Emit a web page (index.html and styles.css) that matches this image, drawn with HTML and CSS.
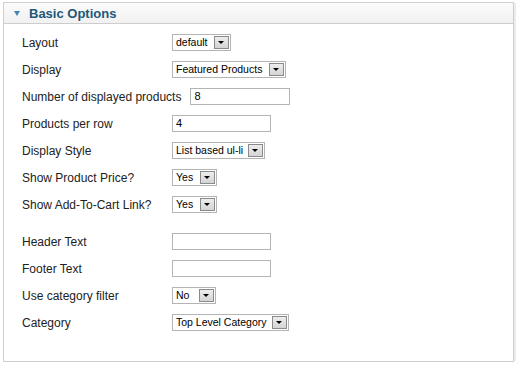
FILE: index.html
```html
<!DOCTYPE html>
<html>

<head>
    <link rel="stylesheet" href="styles.css">
</head>

<body>
    <div class="panel">
        <div class="panel-head">
            <span class="toggle"></span>
            <h3>Basic Options</h3>
        </div>
        <div class="panel-body">
            <div class="row">
                <label>Layout</label>
                <div class="select w-60"><span>default</span><i class="btn"></i></div>
            </div>
            <div class="row">
                <label>Display</label>
                <div class="select w-115"><span>Featured Products</span><i class="btn"></i></div>
            </div>
            <div class="row">
                <label class="long">Number of displayed products</label>
                <div class="input w-100">8</div>
            </div>
            <div class="row">
                <label>Products per row</label>
                <div class="input w-99">4</div>
            </div>
            <div class="row">
                <label>Display Style</label>
                <div class="select w-93"><span>List based ul-li</span><i class="btn"></i></div>
            </div>
            <div class="row">
                <label>Show Product Price?</label>
                <div class="select w-45"><span>Yes</span><i class="btn"></i></div>
            </div>
            <div class="row">
                <label>Show Add-To-Cart Link?</label>
                <div class="select w-45"><span>Yes</span><i class="btn"></i></div>
            </div>
            <div class="spacer"></div>
            <div class="row">
                <label>Header Text</label>
                <div class="input w-99"></div>
            </div>
            <div class="row">
                <label>Footer Text</label>
                <div class="input w-99"></div>
            </div>
            <div class="row">
                <label>Use category filter</label>
                <div class="select w-44"><span>No</span><i class="btn"></i></div>
            </div>
            <div class="row">
                <label>Category</label>
                <div class="select w-118"><span>Top Level Category</span><i class="btn"></i></div>
            </div>
        </div>
    </div>
</body>

</html>
```

FILE: styles.css
```css
body {
    margin: 0;
    background: #fff;
    font-family: "Liberation Sans", Arial, sans-serif;
}

.panel {
    margin: 2px 0 0 3px;
    width: 509px;
    height: 358px;
    border: 1px solid #cfcfcf;
    box-shadow: 3px 0 0 -1px #ececec;
}

.panel-head {
    display: flex;
    align-items: center;
    height: 20px;
    padding-left: 10px;
    border-bottom: 1px solid #cdcdcd;
    background: linear-gradient(to bottom, #fbfbfb, #f1f1f1);
}

.toggle {
    width: 0;
    height: 0;
    border-left: 3px solid transparent;
    border-right: 3px solid transparent;
    border-top: 5px solid #3f86b5;
    margin-right: 9px;
    margin-top: 1px;
}

.panel-head h3 {
    margin: 0;
    font-size: 13px;
    font-weight: bold;
    color: #21577a;
}

.panel-body {
    padding: 5px 0 0 18px;
}

.row {
    display: flex;
    align-items: center;
    height: 27px;
}

.row label {
    min-width: 150px;
    padding-right: 5px;
    box-sizing: border-box;
    white-space: nowrap;
    font-size: 12px;
    color: #222;
}

.row label.long {
    padding-right: 9px;
}

.spacer {
    height: 10px;
}

.select {
    position: relative;
    height: 15px;
    border: 1px solid #b4b4b4;
    background: #fff;
    box-sizing: content-box;
    font-size: 10.5px;
    line-height: 15px;
    color: #000;
}

.select span {
    display: block;
    padding-left: 3px;
    white-space: nowrap;
}

.select .btn {
    position: absolute;
    right: 1px;
    top: 1px;
    width: 13px;
    height: 11px;
    border: 1px solid #8a8a8a;
    background: linear-gradient(to bottom, #ededed, #d4d4d4);
}

.select .btn::after {
    content: '';
    position: absolute;
    left: 3px;
    top: 4px;
    border-left: 3px solid transparent;
    border-right: 3px solid transparent;
    border-top: 3px solid #000;
}

.input {
    height: 15px;
    border: 1px solid #b4b4b4;
    background: #fff;
    font-size: 11px;
    line-height: 15px;
    padding-left: 3px;
    box-sizing: content-box;
}

.w-44 { width: 42px; }
.w-45 { width: 43px; }
.w-60 { width: 57px; }
.w-93 { width: 91px; }
.w-115 { width: 112px; }
.w-118 { width: 115px; }
.w-99 { width: 94px; }
.w-100 { width: 95px; }
```
